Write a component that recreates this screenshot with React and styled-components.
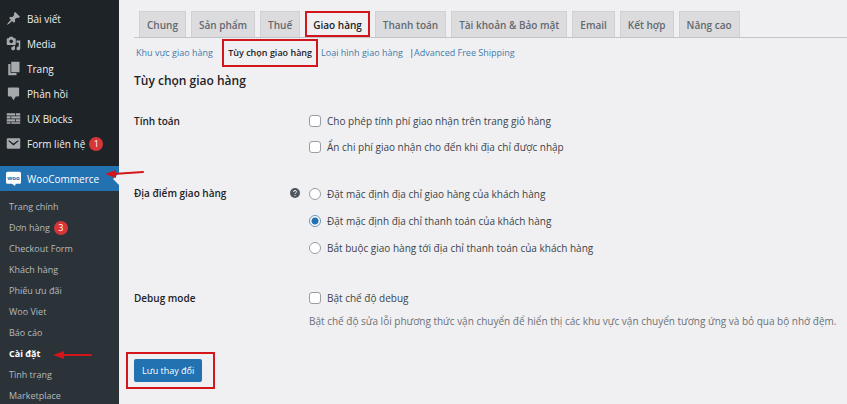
import React, { useState } from "react";
import styled, { createGlobalStyle } from "styled-components";

const GlobalStyle = createGlobalStyle`
  * {
    box-sizing: border-box;
  }
  body {
    margin: 0;
    background: #f0f0f2;
    color: #3c434a;
    font-family: "Open Sans", "Noto Sans", sans-serif;
    font-size: 10px;
    line-height: 16px;
  }
  ul {
    list-style: none;
    margin: 0;
    padding: 0;
  }
  a {
    text-decoration: none;
  }
`;

const Page = styled.div`
  display: flex;
  height: 100vh;
  overflow: hidden;
`;

/* sidebar */
const Sidebar = styled.nav`
  flex: 0 0 119px;
  padding-top: 6px;
  background: #1d2327;
`;
const MenuLink = styled.a`
  position: relative;
  display: flex;
  align-items: center;
  gap: 4px;
  height: 25px;
  padding-left: 6px;
  margin-top: ${(props) => (props.$current ? "10px" : "0")};
  background: ${(props) => (props.$current ? "#2271b1" : "transparent")};
  color: ${(props) => (props.$current ? "#fff" : "#f0f0f1")};
  white-space: nowrap;

  &::after {
    content: "";
    display: ${(props) => (props.$current ? "block" : "none")};
    position: absolute;
    right: 0;
    top: 7px;
    border: 6px solid transparent;
    border-left-width: 0;
    border-right-color: #f0f0f2;
  }
`;
const MenuIcon = styled.svg`
  flex: none;
  width: 15px;
  height: 15px;
  margin-right: 2px;
  fill: #a7aaad;
`;
const Badge = styled.span`
  width: 14px;
  height: 14px;
  border-radius: 50%;
  background: #d63638;
  color: #fff;
  font-size: 9px;
  line-height: 14px;
  text-align: center;
`;
const SubMenu = styled.ul`
  padding: 5px 0;
  background: #2c3338;
`;
const SubLink = styled.a`
  display: flex;
  align-items: center;
  gap: 4px;
  height: 21px;
  padding-left: 9px;
  color: ${(props) => (props.$current ? "#fff" : "#b4b9be")};
  font-size: 9px;
  font-weight: ${(props) => (props.$current ? 700 : 400)};
`;

/* content */
const Content = styled.main`
  flex: 1;
  min-width: 0;
  padding: 11px 0 0 15px;
`;
const Tabs = styled.nav`
  display: flex;
  gap: 5px;
  padding-left: 5px;
  border-bottom: 1px solid #c3c4c7;
`;
const Tab = styled.a`
  height: 26px;
  padding: 0 7px;
  border: 1px solid ${(props) => (props.$active ? "#f0f0f2" : "#d0d1d4")};
  border-bottom: 0;
  background: ${(props) => (props.$active ? "#f0f0f2" : "#dcdcde")};
  color: ${(props) => (props.$active ? "#1d2327" : "#646970")};
  outline: ${(props) => (props.$active ? "2px solid #d2161c" : "none")};
  outline-offset: -2px;
  font-weight: 600;
  line-height: 26px;
  white-space: nowrap;
`;
const Sections = styled.ul`
  display: flex;
  gap: 4px;
  padding: 2px 2px 0;
  font-size: 9px;
  line-height: 26px;
  white-space: nowrap;
`;
const SectionLink = styled.a`
  display: inline-block;
  padding: 0 ${(props) => (props.$active ? "5px" : "0")};
  color: ${(props) => (props.$active ? "#1d2327" : "#3f7cab")};
  font-weight: ${(props) => (props.$active ? 600 : 400)};
  outline: ${(props) => (props.$active ? "2px solid #d2161c" : "none")};
  outline-offset: -1px;
`;
const Heading = styled.h2`
  margin: 5px 0 17px;
  color: #1d2327;
  font-size: 12px;
  font-weight: 600;
  line-height: 20px;
`;
const Group = styled.div`
  display: grid;
  grid-template-columns: 156px 19px 1fr;
  margin-bottom: ${(props) => (props.$spaced ? "24px" : "20px")};
`;
const GroupTitle = styled.div`
  color: #1d2327;
  font-weight: 600;
  line-height: 26px;
`;
const Help = styled.svg`
  width: 10px;
  height: 10px;
  margin-top: 8px;
`;
const Option = styled.label`
  display: flex;
  align-items: center;
  gap: 6px;
  height: ${(props) => (props.$tall ? "27px" : "26px")};
`;
const Box = styled.input`
  appearance: none;
  width: 12px;
  height: 12px;
  margin: 0;
  border: 1px solid #9a9da1;
  border-radius: ${(props) => (props.type === "radio" ? "50%" : "3px")};
  background: #fff;

  &:checked {
    border-color: #6c93b5;
    background: radial-gradient(circle, #2271b1 0 3px, #fff 4px);
  }
`;
const Description = styled.p`
  margin: 2px 0 0;
  color: #6c7076;
`;
const SaveFrame = styled.div`
  width: fit-content;
  margin: 23px 0 0 -8px;
  padding: 5px 11px 5px 6px;
  border: 2px solid #d2161c;
`;
const Save = styled.button`
  display: block;
  height: 23px;
  padding: 0 8px;
  border: 0;
  border-radius: 2px;
  background: #2271b1;
  color: #fff;
  font: inherit;
  font-size: 9px;
`;
const Arrow = styled.svg`
  position: absolute;
  left: ${(props) => props.$left}px;
  top: ${(props) => props.$top}px;
  width: 40px;
  height: 12px;
  z-index: 1;
`;

const icons = {
  pin: (
    <path d="M10.44 3.02l1.82-1.82 6.36 6.35-1.83 1.82c-1.05-.68-2.48-.57-3.41.36l-.75.75c-.92.93-1.04 2.35-.35 3.41l-1.83 1.82-2.41-2.41-2.8 2.79c-.42.42-3.38 2.71-3.8 2.29s1.86-3.39 2.28-3.81l2.79-2.79L4.1 9.36l1.83-1.82c1.05.69 2.48.57 3.4-.36l.75-.75c.93-.92 1.05-2.35.36-3.41z" />
  ),
  media: (
    <path
      fillRule="evenodd"
      d="M13 11V4c0-.55-.45-1-1-1h-1.67L9 1H5L3.67 3H2c-.55 0-1 .45-1 1v7c0 .55.45 1 1 1h10c.55 0 1-.45 1-1zM7 4.5c1.38 0 2.5 1.12 2.5 2.5S8.38 9.5 7 9.5 4.5 8.38 4.5 7 5.62 4.5 7 4.5zM14 6h5v10.5c0 1.38-1.12 2.5-2.5 2.5S14 17.88 14 16.5s1.12-2.5 2.5-2.5c.17 0 .34.02.5.05V9h-3V6zm-4 8.05V13h2v3.5c0 1.38-1.12 2.5-2.5 2.5S7 17.88 7 16.5 8.12 14 9.5 14c.17 0 .34.02.5.05z"
    />
  ),
  page: <path d="M7 15V1h11v14H7zm-1 1h8v3H3V4h3v12z" />,
  comment: <path d="M4 2h12q1.5 0 1.5 1.5v9q0 1.5-1.5 1.5h-3l-3 5-3-5H4q-1.500 0-1.500-1.500v-9Q2.500 2 4 2z" />,
  blocks: (
    <path d="M1 3h11v3H1zM13 3h6v3h-6zM1 7h5v3H1zM7 7h12v3H7zM1 11h11v3H1zM13 11h6v3h-6zM1 15h5v2H1zM7 15h12v2H7z" />
  ),
  mail: (
    <path
      fillRule="evenodd"
      d="M2.500 3h15Q19 3 19 4.500v11q0 1.500-1.500 1.500h-15Q1 17 1 15.500v-11Q1 3 2.500 3zM3 6.500l7 6 7-6-1-1-6 4.500-6-4.500z"
    />
  ),
  woo: (
    <>
      <path fill="#fff" d="M2 1h16q2 0 2 2v12q0 2-2 2h-5l-1 3-4-3H2q-2 0-2-2V3q0-2 2-2z" />
      <text x="10" y="12" fontSize="8" fontWeight="700" textAnchor="middle" fill="#2271b1">
        woo
      </text>
    </>
  ),
};

const menu = [
  { icon: "pin", label: "Bài viết" },
  { icon: "media", label: "Media" },
  { icon: "page", label: "Trang" },
  { icon: "comment", label: "Phản hồi" },
  { icon: "blocks", label: "UX Blocks" },
  { icon: "mail", label: "Form liên hệ", count: 1 },
  { icon: "woo", label: "WooCommerce", current: true },
];

const subMenu = [
  { label: "Trang chính" },
  { label: "Đơn hàng", count: 3 },
  { label: "Checkout Form" },
  { label: "Khách hàng" },
  { label: "Phiếu ưu đãi" },
  { label: "Woo Viet" },
  { label: "Báo cáo" },
  { label: "Cài đặt", current: true },
  { label: "Tình trạng" },
  { label: "Marketplace" },
];

const tabs = [
  "Chung",
  "Sản phẩm",
  "Thuế",
  "Giao hàng",
  "Thanh toán",
  "Tài khoản & Bảo mật",
  "Email",
  "Kết hợp",
  "Nâng cao",
];

const destinations = [
  { value: "shipping", label: "Đặt mặc định địa chỉ giao hàng của khách hàng" },
  { value: "billing", label: "Đặt mặc định địa chỉ thanh toán của khách hàng" },
  { value: "billing_only", label: "Bắt buộc giao hàng tới địa chỉ thanh toán của khách hàng" },
];

const RedArrow = ({ left, top, tilt = 0 }) => (
  <Arrow $left={left} $top={top} viewBox="0 0 40 12" aria-hidden="true">
    <path d={`M8 6L38 ${6 - tilt}`} stroke="#d2161c" strokeWidth="2" strokeLinecap="round" />
    <path d="M0 6l11-4v8z" fill="#d2161c" />
  </Arrow>
);

const App = () => {
  const [destination, setDestination] = useState("billing");

  return (
    <>
      <GlobalStyle />
      <Page>
        <Sidebar>
          {menu.map((item) => (
            <MenuLink href="#" key={item.label} $current={item.current}>
              <MenuIcon viewBox="0 0 20 20" aria-hidden="true">
                {icons[item.icon]}
              </MenuIcon>
              {item.label}
              {item.count && <Badge>{item.count}</Badge>}
            </MenuLink>
          ))}
          <SubMenu>
            {subMenu.map((item) => (
              <li key={item.label}>
                <SubLink href="#" $current={item.current}>
                  {item.label}
                  {item.count && <Badge>{item.count}</Badge>}
                </SubLink>
              </li>
            ))}
          </SubMenu>
        </Sidebar>

        <Content>
          <Tabs>
            {tabs.map((tab) => (
              <Tab href="#" key={tab} $active={tab === "Giao hàng"}>
                {tab}
              </Tab>
            ))}
          </Tabs>
          <Sections>
            <li><SectionLink href="#">Khu vực giao hàng</SectionLink></li>
            <li>&nbsp;</li>
            <li><SectionLink href="#" $active>Tùy chọn giao hàng</SectionLink></li>
            <li><SectionLink href="#">Loại hình giao hàng</SectionLink></li>
            <li>&nbsp;|<SectionLink href="#">Advanced Free Shipping</SectionLink></li>
          </Sections>

          <Heading>Tùy chọn giao hàng</Heading>

          <Group role="group" aria-labelledby="calc">
            <GroupTitle id="calc">Tính toán</GroupTitle>
            <span />
            <div>
              <Option><Box type="checkbox" />Cho phép tính phí giao nhận trên trang giỏ hàng</Option>
              <Option><Box type="checkbox" />Ẩn chi phí giao nhận cho đến khi địa chỉ được nhập</Option>
            </div>
          </Group>

          <Group role="radiogroup" aria-labelledby="dest" $spaced>
            <GroupTitle id="dest">Địa điểm giao hàng</GroupTitle>
            <Help viewBox="0 0 20 20" aria-hidden="true">
              <circle cx="10" cy="10" r="10" fill="#50575e" />
              <path d="M7 8q0-3 3-3t3 2.500q0 1.500-1.500 2.300T10 12M10 14v2" fill="none" stroke="#f0f0f2" strokeWidth="2" />
            </Help>
            <div>
              {destinations.map((item) => (
                <Option key={item.value} $tall>
                  <Box
                    type="radio"
                    name="destination"
                    value={item.value}
                    checked={destination === item.value}
                    onChange={(e) => setDestination(e.target.value)}
                  />
                  {item.label}
                </Option>
              ))}
            </div>
          </Group>

          <Group role="group" aria-labelledby="debug">
            <GroupTitle id="debug">Debug mode</GroupTitle>
            <span />
            <div>
              <Option><Box type="checkbox" />Bật chế độ debug</Option>
              <Description>
                Bật chế độ sửa lỗi phương thức vận chuyển để hiển thị các khu vực vận chuyển tương ứng và bỏ qua bộ nhớ đệm.
              </Description>
            </div>
          </Group>

          <SaveFrame>
            <Save type="button">Lưu thay đổi</Save>
          </SaveFrame>
        </Content>
      </Page>
      <RedArrow left={105} top={168} tilt={2} />
      <RedArrow left={53} top={349} />
    </>
  );
};

export default App;
